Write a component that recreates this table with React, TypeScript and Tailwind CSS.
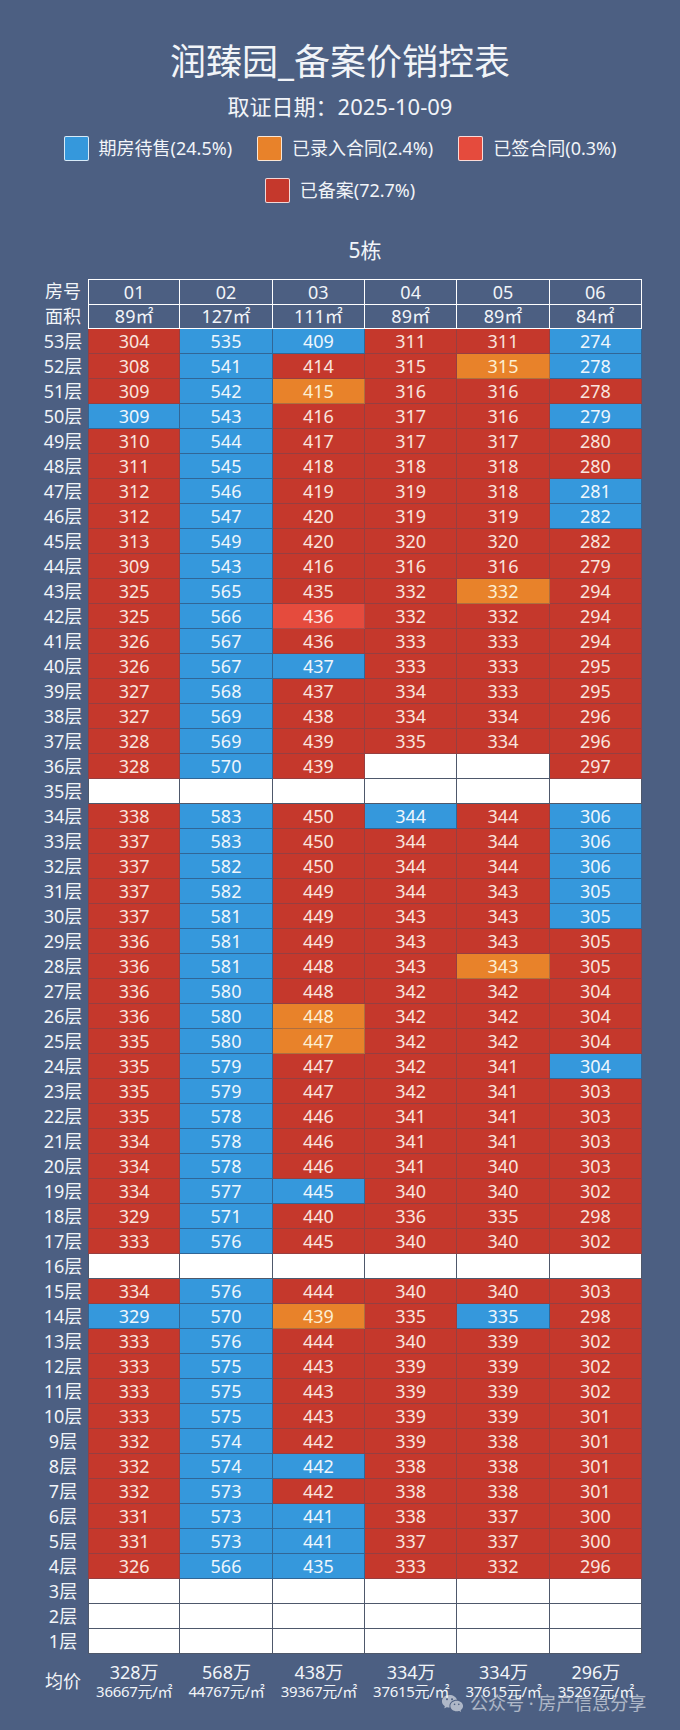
import { RiWechatFill } from 'react-icons/ri';

type Status = 'r' | 'b' | 'o' | 'l' | 'w';

// floor | six cells, value + status letter, "-" = empty
const rawRows = [
  '53|304r 535b 409b 311r 311r 274b',
  '52|308r 541b 414r 315r 315o 278b',
  '51|309r 542b 415o 316r 316r 278r',
  '50|309b 543b 416r 317r 316r 279b',
  '49|310r 544b 417r 317r 317r 280r',
  '48|311r 545b 418r 318r 318r 280r',
  '47|312r 546b 419r 319r 318r 281b',
  '46|312r 547b 420r 319r 319r 282b',
  '45|313r 549b 420r 320r 320r 282r',
  '44|309r 543b 416r 316r 316r 279r',
  '43|325r 565b 435r 332r 332o 294r',
  '42|325r 566b 436l 332r 332r 294r',
  '41|326r 567b 436r 333r 333r 294r',
  '40|326r 567b 437b 333r 333r 295r',
  '39|327r 568b 437r 334r 333r 295r',
  '38|327r 569b 438r 334r 334r 296r',
  '37|328r 569b 439r 335r 334r 296r',
  '36|328r 570b 439r - - 297r',
  '35|- - - - - -',
  '34|338r 583b 450r 344b 344r 306b',
  '33|337r 583b 450r 344r 344r 306b',
  '32|337r 582b 450r 344r 344r 306b',
  '31|337r 582b 449r 344r 343r 305b',
  '30|337r 581b 449r 343r 343r 305b',
  '29|336r 581b 449r 343r 343r 305r',
  '28|336r 581b 448r 343r 343o 305r',
  '27|336r 580b 448r 342r 342r 304r',
  '26|336r 580b 448o 342r 342r 304r',
  '25|335r 580b 447o 342r 342r 304r',
  '24|335r 579b 447r 342r 341r 304b',
  '23|335r 579b 447r 342r 341r 303r',
  '22|335r 578b 446r 341r 341r 303r',
  '21|334r 578b 446r 341r 341r 303r',
  '20|334r 578b 446r 341r 340r 303r',
  '19|334r 577b 445b 340r 340r 302r',
  '18|329r 571b 440r 336r 335r 298r',
  '17|333r 576b 445r 340r 340r 302r',
  '16|- - - - - -',
  '15|334r 576b 444r 340r 340r 303r',
  '14|329b 570b 439o 335r 335b 298r',
  '13|333r 576b 444r 340r 339r 302r',
  '12|333r 575b 443r 339r 339r 302r',
  '11|333r 575b 443r 339r 339r 302r',
  '10|333r 575b 443r 339r 339r 301r',
  '9|332r 574b 442r 339r 338r 301r',
  '8|332r 574b 442b 338r 338r 301r',
  '7|332r 573b 442r 338r 338r 301r',
  '6|331r 573b 441b 338r 337r 300r',
  '5|331r 573b 441b 337r 337r 300r',
  '4|326r 566b 435b 333r 332r 296r',
  '3|- - - - - -',
  '2|- - - - - -',
  '1|- - - - - -',
];

const rows = rawRows.map((line) => {
  const [floor, rest] = line.split('|');
  const cells = rest.split(' ').map((c) =>
    c === '-'
      ? { value: '', status: 'w' as Status }
      : { value: c.slice(0, -1), status: c.slice(-1) as Status }
  );
  return { floor, cells };
});

const units = [
  { no: '01', area: '89㎡', avg: '328万', unit: '36667元/㎡' },
  { no: '02', area: '127㎡', avg: '568万', unit: '44767元/㎡' },
  { no: '03', area: '111㎡', avg: '438万', unit: '39367元/㎡' },
  { no: '04', area: '89㎡', avg: '334万', unit: '37615元/㎡' },
  { no: '05', area: '89㎡', avg: '334万', unit: '37615元/㎡' },
  { no: '06', area: '84㎡', avg: '296万', unit: '35267元/㎡' },
];

const cellStyle: Record<Status, string> = {
  r: 'bg-[#c5382c] text-[#f9e4de] border-[#3e4d6b]/35',
  b: 'bg-[#3598dc] text-[#eef6fc] border-[#2f4468]/60',
  o: 'bg-[#e8822a] text-[#fcefd2] border-[#3e4d6b]/35',
  l: 'bg-[#e54b3d] text-[#fbe6e2] border-[#3e4d6b]/35',
  w: 'bg-white text-[#333] border-[#4e586b]',
};

const legend = [
  { color: 'bg-[#3598dc]', label: '期房待售(24.5%)' },
  { color: 'bg-[#e8822a]', label: '已录入合同(2.4%)' },
  { color: 'bg-[#e54b3d]', label: '已签合同(0.3%)' },
  { color: 'bg-[#c5382c]', label: '已备案(72.7%)' },
];

function LegendItem({ color, label }: { color: string; label: string }) {
  return (
    <div className="flex items-center gap-[10px]">
      <span className={`block w-[25px] h-[25px] rounded-[2px] border border-white/80 ${color}`} />
      <span className="text-[18px] leading-[25px]">{label}</span>
    </div>
  );
}

export default function App() {
  return (
    <div className="relative w-[680px] h-[1730px] bg-[#4c5f82] text-[#f1f4f8] font-['Noto_Sans','Noto_Sans_CJK_SC',sans-serif] overflow-hidden">
      {/* Title */}
      <div className="pt-[40px] text-center">
        <h1 className="text-[36px] leading-[44px]">润臻园_备案价销控表</h1>
        <p className="mt-[7px] text-[22px] leading-[30px]">取证日期：2025-10-09</p>
      </div>

      {/* Legend */}
      <div className="mt-[15px] flex flex-col items-center gap-[17px]">
        <div className="flex items-center gap-[25px]">
          {legend.slice(0, 3).map((l) => (
            <LegendItem key={l.label} {...l} />
          ))}
        </div>
        <LegendItem {...legend[3]} />
      </div>

      {/* Table */}
      <div className="mx-auto mt-[32px] w-[604px]">
        <div className="grid grid-cols-[50px_1fr]">
          <div />
          <div className="text-center text-[21px] leading-[30px]">5栋</div>
        </div>

        <div className="mt-[14px]">
          <div className="grid grid-cols-[50px_repeat(6,1fr)] h-[25px] text-[18px] leading-[24px]">
            <div className="text-center">房号</div>
            {units.map((u, i) => (
              <div
                key={u.no}
                className={`text-center border-t border-r border-b border-white ${i === 0 ? 'border-l' : ''}`}
              >
                {u.no}
              </div>
            ))}
          </div>
          <div className="grid grid-cols-[50px_repeat(6,1fr)] h-[25px] text-[18px] leading-[24px]">
            <div className="text-center">面积</div>
            {units.map((u, i) => (
              <div
                key={u.no}
                className={`text-center border-r border-b border-white ${i === 0 ? 'border-l' : ''}`}
              >
                {u.area}
              </div>
            ))}
          </div>

          {rows.map((row) => (
            <div
              key={row.floor}
              className="grid grid-cols-[50px_repeat(6,1fr)] h-[25px] text-[18px] leading-[24px]"
            >
              <div className="text-center">{row.floor}层</div>
              {row.cells.map((c, i) => (
                <div
                  key={i}
                  className={`text-center border-r border-b ${i === 0 ? 'border-l' : ''} ${cellStyle[c.status]}`}
                >
                  {c.value}
                </div>
              ))}
            </div>
          ))}
        </div>

        {/* Average price */}
        <div className="mt-[8px] grid grid-cols-[50px_repeat(6,1fr)]">
          <div className="flex items-center justify-center text-[18px]">均价</div>
          {units.map((u) => (
            <div key={u.no} className="flex flex-col items-center">
              <span className="text-[18px] leading-[20px]">{u.avg}</span>
              <span className="text-[15px] leading-[18px] tracking-[-0.3px] whitespace-nowrap">{u.unit}</span>
            </div>
          ))}
        </div>
      </div>

      {/* Watermark */}
      <div className="absolute left-[441px] top-[1690px] flex items-center gap-[6px] text-white/55">
        <RiWechatFill className="w-[23px] h-[23px]" />
        <span className="text-[18px] leading-[26px]">公众号 · 房产信息分享</span>
      </div>
    </div>
  );
}
